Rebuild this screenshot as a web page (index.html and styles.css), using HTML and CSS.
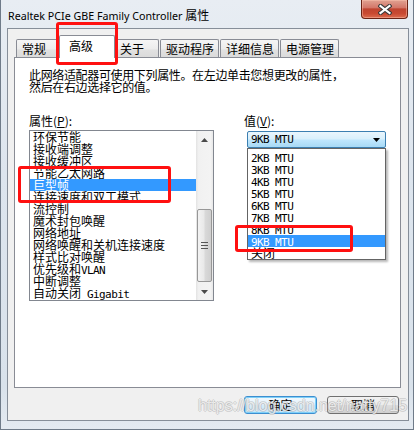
FILE: index.html
```html
<!DOCTYPE html>
<html lang="zh-CN">
<head>
<meta charset="utf-8">
<title>Realtek PCIe GBE Family Controller 属性</title>
<link rel="stylesheet" href="styles.css">
</head>
<body>
<div class="window">
  <div class="titlebar">
    <span class="title">Realtek PCIe GBE Family Controller <span class="title-cjk">属性</span></span>
    <div class="close">
      <svg width="14" height="11" viewBox="0 0 14 11">
        <path d="M2.5 2 L11.5 9 M11.5 2 L2.5 9" stroke="#3a3a3a" stroke-width="4.2" stroke-linecap="square" fill="none"/>
        <path d="M2.5 2 L11.5 9 M11.5 2 L2.5 9" stroke="#ffffff" stroke-width="2.2" stroke-linecap="square" fill="none"/>
      </svg>
    </div>
  </div>
  <div class="client">
    <div class="tabs">
      <div class="tab tab-first">常规</div>
      <div class="tab active">高级</div>
      <div class="tab">关于</div>
      <div class="tab">驱动程序</div>
      <div class="tab">详细信息</div>
      <div class="tab">电源管理</div>
    </div>
    <div class="panel">
      <p class="desc">此网络适配器可使用下列属性。在左边单击您想更改的属性，<br>然后在右边选择它的值。</p>
      <div class="cols">
        <div class="col-left">
          <div class="label">属性(<u>P</u>):</div>
          <div class="listbox">
            <ul class="items">
              <li>环保节能</li>
              <li>接收端调整</li>
              <li>接收缓冲区</li>
              <li>节能乙太网路</li>
              <li class="sel">巨型帧</li>
              <li>连接速度和双工模式</li>
              <li>流控制</li>
              <li>魔术封包唤醒</li>
              <li>网络地址</li>
              <li>网络唤醒和关机连接速度</li>
              <li>样式比对唤醒</li>
              <li>优先级和<span class="lat">VLAN</span></li>
              <li>中断调整</li>
              <li>自动关闭<span class="lat"> Gigabit</span></li>
            </ul>
            <div class="scrollbar">
              <div class="sb-btn">
                <svg width="7" height="4" viewBox="0 0 7 4"><path d="M0 4 L3.5 0 L7 4 Z" fill="#4a4a4a"/></svg>
              </div>
              <div class="sb-track">
                <div class="sb-thumb">
                  <svg width="7" height="7" viewBox="0 0 7 7">
                    <path d="M0 0.5 H7 M0 3.5 H7 M0 6.5 H7" stroke="#555" stroke-width="1"/>
                  </svg>
                </div>
              </div>
              <div class="sb-btn">
                <svg width="7" height="4" viewBox="0 0 7 4"><path d="M0 0 L3.5 4 L7 0 Z" fill="#4a4a4a"/></svg>
              </div>
            </div>
          </div>
        </div>
        <div class="col-right">
          <div class="label">值(<u>V</u>):</div>
          <div class="combo-wrap">
            <div class="combo">
              <span class="lat">9KB MTU</span>
              <svg width="7" height="4" viewBox="0 0 7 4"><path d="M0 0 L7 0 L3.5 4 Z" fill="#000"/></svg>
            </div>
            <ul class="dropdown">
              <li><span class="lat">2KB MTU</span></li>
              <li><span class="lat">3KB MTU</span></li>
              <li><span class="lat">4KB MTU</span></li>
              <li><span class="lat">5KB MTU</span></li>
              <li><span class="lat">6KB MTU</span></li>
              <li><span class="lat">7KB MTU</span></li>
              <li><span class="lat">8KB MTU</span></li>
              <li class="sel"><span class="lat">9KB MTU</span></li>
              <li>关闭</li>
            </ul>
          </div>
        </div>
      </div>
    </div>
    <div class="buttons">
      <div class="btn btn-default">确定</div>
      <div class="btn">取消</div>
    </div>
  </div>
</div>
<div class="mark mark-tab"></div>
<div class="mark mark-list"></div>
<div class="mark mark-mtu"></div>
<div class="watermark">https://blog.csdn.net/natty715</div>
</body>
</html>
```
FILE: styles.css
```css
body {
  margin: 0;
  width: 414px;
  height: 430px;
  overflow: hidden;
  position: relative;
  font-family: "Noto Sans CJK SC", sans-serif;
  font-size: 12px;
  color: #000;
}

.window {
  box-sizing: border-box;
  width: 414px;
  height: 430px;
  display: flex;
  flex-direction: column;
  padding: 0 4px 8px 6px;
  border-left: 1px solid #6f7b89;
  border-right: 1px solid #6f7b89;
  border-bottom: 1px solid #6f7b89;
  background: linear-gradient(#e8edf3, #dde5ee 40%, #d9e2eb 90%, #e4eaf1);
}

.titlebar {
  height: 28px;
  display: flex;
  justify-content: space-between;
  align-items: flex-start;
}

.title {
  padding: 8px 0 0 1px;
  font-family: "Noto Sans", "Noto Sans CJK SC", sans-serif;
  font-size: 10.7px;
  line-height: 14px;
  color: #000;
  white-space: nowrap;
}

.title-cjk {
  font-family: "Noto Sans CJK SC", sans-serif;
  font-size: 12px;
}

.close {
  box-sizing: border-box;
  width: 47px;
  height: 19px;
  margin-right: 1px;
  border: 1px solid #6a2315;
  border-top: none;
  border-radius: 0 0 4px 4px;
  background: linear-gradient(#e0a292 0%, #d4786a 42%, #bf4430 50%, #c94a32 75%, #dc6c50 100%);
  box-shadow: inset 0 0 0 1px rgba(255, 200, 180, 0.45);
  display: flex;
  align-items: center;
  justify-content: center;
}

.client {
  flex: 1;
  border: 1px solid #868e99;
  background: #f0f0f0;
  padding: 6px 7px 0 6px;
  display: flex;
  flex-direction: column;
}

.tabs {
  display: flex;
  align-items: flex-end;
  height: 23px;
  margin-left: 2px;
}

.tab {
  box-sizing: border-box;
  height: 19px;
  min-width: 45px;
  padding: 0 4px 0 5px;
  margin-right: 1px;
  border: 1px solid #898c95;
  border-bottom: none;
  border-radius: 2px 2px 0 0;
  background: linear-gradient(#f5f5f5, #ececec 50%, #e1e1e1 55%, #dadada);
  line-height: 17px;
  white-space: nowrap;
}

.tab-first {
  min-width: 44px;
}

.tab.active {
  position: relative;
  z-index: 1;
  height: 23px;
  min-width: 56px;
  margin: 0 -1px 0 -2px;
  padding: 0 9px;
  background: #fff;
  line-height: 20px;
}

.panel {
  box-sizing: border-box;
  height: 331px;
  margin-top: -1px;
  border: 1px solid #898c95;
  background: #fff;
  padding: 11px 14px 0 14px;
}

.desc {
  margin: 0;
  line-height: 12px;
  letter-spacing: -0.35px;
  white-space: nowrap;
}

.cols {
  display: flex;
  margin-top: 22px;
}

.col-left {
  width: 186px;
}

.col-right {
  width: 142px;
  margin-left: 30px;
}

.label {
  line-height: 12px;
  white-space: nowrap;
}

.listbox {
  box-sizing: border-box;
  height: 171px;
  margin-top: 3px;
  border: 1px solid #828790;
  display: flex;
}

.items {
  flex: 1;
  list-style: none;
  margin: 0;
  padding: 0;
}

.items li,
.dropdown li {
  height: 12px;
  line-height: 12px;
  padding-left: 3px;
  white-space: nowrap;
}

.items li.sel,
.dropdown li.sel {
  background: #3399ff;
  color: #fff;
}

.lat {
  font-family: "DejaVu Sans Mono", monospace;
  font-size: 11px;
  letter-spacing: -0.6px;
  white-space: pre;
}

.scrollbar {
  width: 17px;
  display: flex;
  flex-direction: column;
  background: linear-gradient(to right, #e3e3e3, #f1f1f1 15%, #f3f3f3 85%, #e8e8e8);
}

.sb-btn {
  height: 17px;
  display: flex;
  align-items: center;
  justify-content: center;
}

.sb-track {
  flex: 1;
  display: flex;
  flex-direction: column;
  justify-content: flex-end;
}

.sb-thumb {
  box-sizing: border-box;
  height: 73px;
  margin: 0 1px 1px 1px;
  border: 1px solid #979797;
  border-radius: 2px;
  background: linear-gradient(to right, #f3f3f3, #e9e9e9 45%, #d9d9d9 55%, #cfcfcf);
  display: flex;
  align-items: center;
  justify-content: center;
}

.combo-wrap {
  position: relative;
  width: 139px;
  margin: 4px 0 0 3px;
}

.combo {
  box-sizing: border-box;
  height: 17px;
  border: 1px solid #3c7fb1;
  border-radius: 2px;
  background: linear-gradient(#eaf6fd, #d9f0fc 45%, #bee6fd 55%, #a7d9f5);
  display: flex;
  align-items: center;
  justify-content: space-between;
  padding: 0 5px 0 3px;
  line-height: 12px;
}

.dropdown {
  position: absolute;
  top: 100%;
  left: 0;
  right: 0;
  z-index: 2;
  box-sizing: border-box;
  height: 112px;
  margin: 0;
  padding: 2px 0 0;
  list-style: none;
  border: 1px solid #646464;
  background: #fff;
  box-shadow: 2px 2px 2px rgba(0, 0, 0, 0.28);
  overflow: hidden;
}

.buttons {
  display: flex;
  justify-content: flex-end;
  gap: 10px;
  margin-top: 8px;
  padding-right: 2px;
}

.btn {
  box-sizing: border-box;
  width: 72px;
  height: 18px;
  border: 1px solid #707070;
  border-radius: 3px;
  background: linear-gradient(#f2f2f2, #ebebeb 50%, #dddddd 52%, #cfcfcf);
  display: flex;
  align-items: center;
  justify-content: center;
  line-height: 12px;
}

.btn-default {
  width: 73px;
  border-color: #3c8ed0;
  box-shadow: inset 0 0 0 1px #7fd0f8;
  background: linear-gradient(#f2f9fe, #e4f2fc 50%, #d6ecfb 52%, #cbe6f9);
}

.mark {
  position: absolute;
  box-sizing: border-box;
  border: 3px solid #ff1010;
  border-radius: 3px;
  z-index: 5;
}

.mark-tab {
  left: 56px;
  top: 22px;
  width: 62px;
  height: 43px;
}

.mark-list {
  left: 18px;
  top: 166px;
  width: 153px;
  height: 37px;
}

.mark-mtu {
  left: 235px;
  top: 225px;
  width: 118px;
  height: 27px;
}

.watermark {
  position: absolute;
  left: 198px;
  top: 398px;
  z-index: 6;
  font-family: "Liberation Sans", sans-serif;
  font-size: 16px;
  line-height: 16px;
  white-space: nowrap;
  color: rgba(255, 255, 255, 0.72);
  text-shadow: 1px 0 rgba(140, 140, 140, 0.3), -1px 0 rgba(140, 140, 140, 0.3), 0 1px rgba(140, 140, 140, 0.3), 0 -1px rgba(140, 140, 140, 0.3);
}
```
